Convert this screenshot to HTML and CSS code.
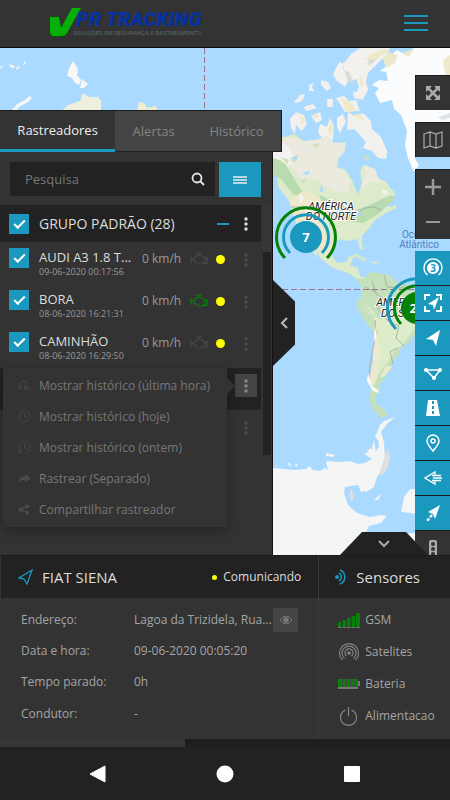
FILE: index.html
```html
<!DOCTYPE html>
<html lang="pt-BR">
<head>
<meta charset="utf-8">
<meta name="viewport" content="width=device-width, initial-scale=1">
<title>VPR Tracking</title>
<link rel="stylesheet" href="styles.css">
</head>
<body>
<svg class="defs" width="0" height="0" aria-hidden="true">
  <symbol id="dots" viewBox="0 0 4 16"><circle cx="2" cy="3" r="1.7"/><circle cx="2" cy="8" r="1.7"/><circle cx="2" cy="13" r="1.7"/></symbol>
  <symbol id="engine" viewBox="0 0 18 14"><path d="M1 4v7M1 7.500h3M4 5h2l1-1.500h5l1.500 2h1.500v2h1.500V5.500h.5v6H14.500v-2L12.500 12H8L5.500 9.500H4zM6 1h6M9 1v2.500" fill="none" stroke="currentColor" stroke-width="1.200"/></symbol>
</svg>

<header class="topbar">
  <a class="logo" href="#" aria-label="VPR Tracking">
    <svg class="logo-mark" viewBox="0 0 32 30" aria-hidden="true"><path d="M0 9l9-1 3 11L22 1h9L18 25q-2 4-6 4H4q-3 0-3-3z" fill="#085508"/><path d="M1 9h9l2 11L23 0h9L18 25q-2 3-6 3H5q-3 0-4-4z" fill="#06b006"/></svg>
    <span class="logo-text"><strong>PR TRACKING</strong><small>SOLUÇÕES EM SEGURANÇA E RASTREAMENTO</small></span>
  </a>
  <button class="menu-button" aria-label="Menu"><span></span><span></span><span></span></button>
</header>

<main class="stage">
  <svg class="map" viewBox="0 48 450 507" preserveAspectRatio="xMidYMid slice" role="img" aria-label="Mapa">
    <rect y="48" width="450" height="507" fill="#aadaff"/>
    <path d="M12 110l5-6 8-4 5-4 2 2-4 4-9 5-3 4zM68 72l2-6 3-5 4 6 1 5-1 3 4 5-2 5-4-2-3-5-5-2zM80 88l2-9 6 5-4 4zM9 64l6 2-1 2-4-1zM17 67l3-1-1 2-3 2zM23 65l2-4 1 3zM0 67l4-2-3 4z" fill="#f7f8f5"/>
    <path d="M60 112l8-7 12-4 3-8 6 4 9 0 3 4v12z" fill="#eef0dd"/>
    <path d="M137 111l2-9 5 1 3 5 9-2 2 6z" fill="#f0edcf"/>
    <!-- Arctic islands -->
    <g fill="#f2f1ed">
      <path d="M345 62l6-8 9-6h30l-4 8-9 8-9 9-2 9 2 8-5 9-7-5 3-8-3-7-6 2-8-7 2-7-7-2z"/>
      <path d="M333 75l3-7 4-7 3 7 2 6 3 7-3 6-8-6zM321 80l7 2 3 6-4 3-6-6zM309 85l5-2-2 4 2 4-5 0zM294 102l6-7 5-1-3 7-6 2zM303 107l10-3 4 4-10 3zM327 99h6l0 8-6 0zM336 98l8-2 5 5 7-1 4 11-15 1zM353 91l8 3 2 6-9-2z"/>
      <path d="M290 119l6-7 8 3 3 9-5 7-6-6-1 9-4-6zM311 116l9-4 2 8-6 3zM318 133l2-9 7 3 3-9 4 8-1 14-8 1zM337 118l6-4 3 8-6 11-3-6zM348 112l7 4 8-3 8 8 1 8 9 8 6 14-1 8-8-1-6-7-9-3 3-6-7-8-5-5-7 1z"/>
    </g>
    <path d="M369 66l12-11 8-7-21 12zM390 88l-8 2-2 7 4 5-6 4M352 72l5 5M344 70l4 11 6 4-4-12z" fill="#d9dbdb"/>
    <path d="M341 98l8 3 8 10-11 0zM351 115l9-1 6 8-5-3zM349 73l4 3-2 3zM363 60l14-9 14-1-16 9zM300 114l5 6-3 5zM313 114l6 1-4 4zM328 129l3-7 3 8-4 7zM361 75l3 7-2 6-3-6z" fill="#f0e9c8"/>
    <path d="M380 103l-5-10 4-5-7-3 7-5 9 1-2-9-6-1 8-6 1-8 8-7 9 5 8-7h36v110h-21l-4 18-6-2-6-4-5-12-3-13 2-14-6-16-7-6-2-9z" fill="#fbfcfd"/>
    <path d="M383 58l5-6 10 3-3 8-9 5zM402 53l12-4-5 8zM443 60l7-5v23l-5-4z" fill="#efe9cb"/>
    <path d="M438 117l12-4v5l-8 2z" fill="#dfe3e5"/>
    <path d="M414 157h36v30h-36v-15l5-7z" fill="#aadaff"/>
    <!-- North America -->
    <path d="M273 136l12 1 9-3 10 7 12-1 11-4 7 7 12-1-1 9-6 7-2 9 9 3 6 10 6 15 4-12-2-11 3-7 11 5 3 8 8 3 8 10 3 3-8 7-5 5 9 1 3-3 2 4-11 5-10 6-6 8-8 9v8l2 6-4-1-3-10-9 2-8-2-7 5-2 10 6 9 9-1 3-5 5-1-4 9 8 3 2 8 9 3 5-3-4 8-12-4-8-6-17-6-12-9-5-8 2 8-8-11-5-9-9-16-6-21-8-10-4-6z" fill="#dcebc9"/>
    <path d="M286 137l19 4 10-1 11-3 8 6 11 0-1 9-6 6-3 9 9 4 7 11-3 10-15-1-17-11-15-1-14-15-11-15zM365 165l10 4 3 8 4 6-12-2-5 9-4-4 4-10z" fill="#ece9df"/>
    <path d="M273 157l12 7 8 13 9 14 20 5 15 7 16 8 17-6 12-6 10-4 3 4-18 16-14 8-17-2-12-12-24-9-17-6-12-15-8-4z" fill="#b9dbb0"/>
    <path d="M289 200l16-10 14 6 6 12-7 12 8 16 7 10-6 9-11-8-14-15-9-16z" fill="#eee8cc"/>
    <path d="M273 148l11-5 7 8 2 8-5 7-7-6-8-2zM382 190l5 0 1 5-5-1zM299 193l5 5-4 7zM304 204l4 8-3 2z" fill="#f3f3f1"/>
    <path d="M290 160l8-6-3 9zM281 157l8 3-2 4zM300 180l7-2-4 6zM363 155l7 2-3 4zM312 145l7-2-2 5z" fill="#cde2b6"/>
    <path d="M291 207h48l8 8 10-2 8-5 9-1 8 3" fill="none" stroke="#aab4a6" stroke-width="1"/>
    <path d="M290 158l8-2-1 4zM302 174l8-4-2 5zM319 191l3-7 1 8zM349 210l10 1 3 6-8-3z" fill="#aadaff"/>
    <path d="M348 257l9-3 11 6-4 1-8-4-7 2zM371 261l8 1-3 2-5-1z" fill="#d7e7c3"/>
    <!-- South America -->
    <path d="M356 278l8 1 6-7 12 2 8 1 6 7 10 2 5 6 39 16v17l-33 9-8 11-8 5-3 9-7 5 1 7-6 4-2 7-5 5 1 7-5 5 1 7 8 5 4 6-6 3-9-8-4-11 3-14 1-18 3-15-2-20-8-9-8-14-2-6 6-8-1-9z" fill="#c5e1bc"/>
    <path d="M361 295l9 17 9 7 18-3 9-8 13 15-8 11-9 11-7 5-7 12-8 10-7 14-3-5 3-16 1-18 4-15-3-18-9-10z" fill="#ddecc9"/>
    <path d="M361 302l8 12 9 5-2 20 4 11-2 18-4 18-5-4 4-21 1-24 2-16-8-10zM380 377l6-11 6 1-8 10z" fill="#eee8ce"/>
    <path d="M369 374l3-22 4-17-1-15M377 293l-12-6M384 275l3 12 15 1 3-4M372 281l4 13 10 6-9 8 11 13 11 5-3 12 8 8M397 348l-7 4 3 12" fill="none" stroke="#aab3a5" stroke-width="1"/>
    <path d="M368 373l4 13 6 4 1 3-6-2-6-10zM375 326l2 11-3 5z" fill="#fafafa"/>
    <!-- Antarctica -->
    <path d="M273 468l12 1 9 1 12-1 3-3 4 4 7 1 5-3 3 2-2-9 14 1 10-1 8 3 7-1 7-4-4-8 2-3 5 4 4-5-1-7-3-3 5-12 4-4 11-4-8 7-6 8 3 10 1 16-2 11-6 8-3 10-8 5-9-7-12 2-1 6 4 12 9 8 13 4 11-2 6 1-6 7-12 3-4 8 8 7 18-6 36-3v31H273z" fill="#f4f5f5"/>
    <path d="M374 440l2 13-6 5-6-5 7-1zM367 450l5-1-3 4zM326 453l9 2-2 2-7-1zM287 462l4 2-1 3zM294 465l4-1-1 3zM374 500l8-7-4 7zM359 487l6-3 1 6-5 2zM401 512l3-15 6-8 8 0v25z" fill="#f4f5f5"/>
    <path d="M388 448l2 10-2 10-6 7-3-1 4-12zM351 488l3 7-2 7-3-6z" fill="#dedfe0"/>
    <path d="M204.500 48v62M273 289.500h142" fill="none" stroke="#9e7387" stroke-width="1" stroke-dasharray="6 3"/>
    <g class="place">
      <text x="331" y="210">AMÉRICA</text><text x="331" y="220">DO NORTE</text>
      <text x="399" y="306">AMÉRICA</text><text x="399" y="317">DO SUL</text>
    </g>
    <g class="ocean"><text x="419" y="238">Oceano</text><text x="419" y="248">Atlântico</text></g>
    <g fill="none" stroke-width="3">
      <path d="M285 258a29.500 29.500 0 1 1 42 0" stroke="#078007"/>
      <path d="M290 253a22.500 22.500 0 1 1 32 0" stroke="#1b98bd"/>
      <path d="M396 329a29.500 29.500 0 1 1 42 0" stroke="#1b98bd"/>
      <path d="M401 324a22.500 22.500 0 1 1 32 0" stroke="#078007"/>
    </g>
    <circle cx="306" cy="237" r="16" fill="#1b98bd"/><circle cx="417" cy="308" r="16" fill="#078007"/>
    <g class="count"><text x="306" y="242">7</text><text x="417" y="313">21</text></g>
  </svg>

  <aside class="sidebar">
    <nav class="tabs" aria-label="Painel">
      <button class="tab active">Rastreadores</button><button class="tab">Alertas</button><button class="tab">Histórico</button>
    </nav>
    <div class="panel">
      <form class="search">
        <div class="search-box">
          <input type="text" placeholder="Pesquisa" aria-label="Pesquisa">
          <button type="button" aria-label="Buscar"><svg width="14" height="14" viewBox="0 0 14 14"><circle cx="6" cy="6" r="4.500" fill="none" stroke="#e5e5e5" stroke-width="1.800"/><path d="M9 9l4 4" stroke="#e5e5e5" stroke-width="2"/></svg></button>
        </div>
        <button type="button" class="list-button" aria-label="Opções"><svg width="14" height="10" viewBox="0 0 14 10"><path d="M0 2h14M0 5h14M0 8h14" stroke="#eee" stroke-width="1.500"/></svg></button>
      </form>
      <div class="list-area">
        <div class="list">
          <div class="group">
            <input type="checkbox" id="group" checked><label for="group">GRUPO PADRÃO (28)</label>
            <button class="collapse" aria-label="Recolher"><span></span></button>
            <button class="more light" aria-label="Mais"><svg><use href="#dots"/></svg></button>
          </div>
          <div class="vehicle">
            <input type="checkbox" id="v1" checked><label for="v1"><b>AUDI A3 1.8 T...</b><small>09-06-2020 00:17:56</small></label>
            <span class="speed">0 km/h</span><svg class="engine"><use href="#engine"/></svg><i class="status"></i>
            <button class="more" aria-label="Mais"><svg><use href="#dots"/></svg></button>
          </div>
          <div class="vehicle">
            <input type="checkbox" id="v2" checked><label for="v2"><b>BORA</b><small>08-06-2020 16:21:31</small></label>
            <span class="speed">0 km/h</span><svg class="engine on"><use href="#engine"/></svg><i class="status"></i>
            <button class="more" aria-label="Mais"><svg><use href="#dots"/></svg></button>
          </div>
          <div class="vehicle">
            <input type="checkbox" id="v3" checked><label for="v3"><b>CAMINHÃO</b><small>08-06-2020 16:29:50</small></label>
            <span class="speed">0 km/h</span><svg class="engine"><use href="#engine"/></svg><i class="status"></i>
            <button class="more" aria-label="Mais"><svg><use href="#dots"/></svg></button>
          </div>
          <div class="vehicle selected">
            <button class="more open" aria-label="Mais" aria-expanded="true"><svg><use href="#dots"/></svg></button>
            <div class="dropdown">
              <button><svg viewBox="0 0 14 14"><path d="M2 10A5 5 0 1 1 11 5M0 10h4v-3" /><path d="M6 8l1-1v5M9 6v6M9 9q3-1 3 1v2"/></svg>Mostrar histórico (última hora)</button>
              <button><svg viewBox="0 0 14 14"><circle cx="7" cy="7" r="6"/><path d="M7 3v4l3 2"/></svg>Mostrar histórico (hoje)</button>
              <button><svg viewBox="0 0 14 14"><path d="M3 11.500A6 6 0 1 1 7 13M0 12h4V8M7 3v4l3 2"/></svg>Mostrar histórico (ontem)</button>
              <button><svg class="solid" viewBox="0 0 14 14"><path d="M8 2l6 5-6 4V8.500Q3 8 1 12 0 5 8 4.500z"/></svg>Rastrear (Separado)</button>
              <button><svg class="solid" viewBox="0 0 14 14"><circle cx="3" cy="7" r="2.500"/><circle cx="10" cy="3.500" r="2.200"/><circle cx="10" cy="10.500" r="2.200"/><path d="M3 6l7-3v1.500L4.500 7l5.500 2.500V11L3 8z"/></svg>Compartilhar rastreador</button>
            </div>
          </div>
          <div class="vehicle"><button class="more" aria-label="Mais"><svg><use href="#dots"/></svg></button></div>
        </div>
        <div class="scroll"><span></span></div>
      </div>
    </div>
    <button class="side-toggle" aria-label="Recolher painel"><svg width="8" height="12" viewBox="0 0 8 12"><path d="M7 1L2 6l5 5" fill="none" stroke="#bbb" stroke-width="2"/></svg></button>
  </aside>

  <div class="tools">
    <button class="tool" aria-label="Tela cheia"><svg viewBox="0 0 20 20"><path d="M4 4l12 12M16 4L4 16" stroke="#aaa" stroke-width="2.500"/><path d="M3 3h6L3 9zM17 3v6l-6-6zM3 17v-6l6 6zM17 17h-6l6-6z" fill="#aaa"/></svg></button>
    <button class="tool" aria-label="Camadas"><svg viewBox="0 0 20 20"><path d="M1 4l6-2 6 2 6-2v14l-6 2-6-2-6 2zM7 2v14M13 4v14" fill="none" stroke="#aaa" stroke-width="1.200"/></svg></button>
    <div class="zoom">
      <button class="tool" aria-label="Aproximar"><svg viewBox="0 0 20 20"><path d="M10 2v16M2 10h16" stroke="#999" stroke-width="2.500"/></svg></button>
      <button class="tool" aria-label="Afastar"><svg viewBox="0 0 20 20"><path d="M3 10h14" stroke="#999" stroke-width="2"/></svg></button>
    </div>
    <div class="blue-tools">
      <button class="tool" aria-label="Agrupar"><svg viewBox="0 0 20 20"><circle cx="10" cy="10" r="6" fill="#fff"/><path d="M4.500 17a9 9 0 1 1 11 0" fill="none" stroke="#fff" stroke-width="1.300"/><text x="10" y="13.500">3</text></svg></button>
      <button class="tool" aria-label="Enquadrar"><svg viewBox="0 0 20 20"><path d="M2 7V2h5M13 2h5v5M18 13v5h-5M7 18H2v-5" fill="none" stroke="#fff" stroke-width="2"/><path d="M16 4L5 11l5 1 1 5z" fill="#fff"/></svg></button>
      <button class="tool" aria-label="Veículos"><svg viewBox="0 0 20 20"><path d="M17 2L3 11l7 1 3 6z" fill="#fff"/></svg></button>
      <button class="tool" aria-label="Cercas"><svg viewBox="0 0 20 20"><path d="M3 7h14l-6 8z" fill="none" stroke="#fff" stroke-width="1.500"/><circle cx="3" cy="7" r="2" fill="#fff"/><circle cx="17" cy="7" r="2" fill="#fff"/><circle cx="11" cy="15" r="2" fill="#fff"/></svg></button>
      <button class="tool" aria-label="Rotas"><svg viewBox="0 0 20 20"><path d="M5 2h9l3 16H3z" fill="#fff"/><path d="M10 3v14" stroke="#1b98bd" stroke-width="2" stroke-dasharray="3 2"/></svg></button>
      <button class="tool" aria-label="Pontos"><svg viewBox="0 0 20 20"><path d="M10 18Q4 11 4 8a6 6 0 0 1 12 0q0 3-6 10z" fill="none" stroke="#fff" stroke-width="1.500"/><circle cx="10" cy="8" r="2" fill="none" stroke="#fff" stroke-width="1.500"/></svg></button>
      <button class="tool" aria-label="Nomes"><svg viewBox="0 0 20 20"><path d="M12 7V4L2 10l10 6v-3M9 7.500h9M10 10h9M9 12.500h9" fill="none" stroke="#fff" stroke-width="1.300"/></svg></button>
      <button class="tool" aria-label="Rastro"><svg viewBox="0 0 20 20"><path d="M17 2L5 9l5 2 2 5z" fill="#fff"/><path d="M9 12l-5 6" stroke="#fff" stroke-width="2.500" stroke-dasharray="3 1.500"/></svg></button>
      <button class="tool gray" aria-label="Trânsito"><svg viewBox="0 0 20 20"><rect x="6" y="1" width="8" height="18" rx="2" fill="#aaa"/><circle cx="10" cy="5" r="2" fill="#333"/><circle cx="10" cy="10" r="2" fill="#333"/><circle cx="10" cy="15" r="2" fill="#333"/></svg></button>
    </div>
  </div>
  <button class="bottom-toggle" aria-label="Recolher detalhes"><svg width="12" height="8" viewBox="0 0 12 8"><path d="M1 1l5 5 5-5" fill="none" stroke="#aaa" stroke-width="2"/></svg></button>
</main>

<section class="details">
  <article class="device">
    <header>
      <svg width="16" height="16" viewBox="0 0 16 16"><path d="M14 1L1 9l5 1 3 5z" fill="none" stroke="#1b98bd" stroke-width="1.300"/></svg>
      <h2>FIAT SIENA</h2><span class="state">Comunicando</span>
    </header>
    <dl>
      <div><dt>Endereço:</dt><dd>Lagoa da Trizidela, Rua...</dd><button aria-label="Ver endereço"><svg width="14" height="10" viewBox="0 0 14 10"><path d="M1 5q6-8 12 0-6 8-12 0z" fill="none" stroke="#777"/><circle cx="7" cy="5" r="2.800" fill="#777"/></svg></button></div>
      <div><dt>Data e hora:</dt><dd>09-06-2020 00:05:20</dd></div>
      <div><dt>Tempo parado:</dt><dd>0h</dd></div>
      <div><dt>Condutor:</dt><dd>-</dd></div>
    </dl>
  </article>
  <article class="sensors">
    <header>
      <svg width="14" height="16" viewBox="0 0 14 16"><circle cx="3" cy="8" r="2" fill="#1b98bd"/><path d="M5 4a4.500 4.500 0 0 1 0 8M6 1a7.500 7.500 0 0 1 0 14" fill="none" stroke="#1b98bd" stroke-width="1.500"/></svg>
      <h2>Sensores</h2>
    </header>
    <ul>
      <li><svg viewBox="0 0 22 20"><path d="M0 12h3v5H0zM4.500 10h3.500v7H4.500zM9 8h3.500v9H9zM13.500 6H17v11h-3.500zM18 3h4v14h-4z" fill="#078007"/><path d="M0 17.500h22" stroke="#777" stroke-dasharray="3.500 1"/></svg>GSM</li>
      <li><svg viewBox="0 0 22 20"><circle cx="11" cy="11" r="1.800" fill="#858585"/><path d="M8.500 14a4 4 0 1 1 5 0M6.500 16.500a7 7 0 1 1 9 0M4.500 18a9.500 9.500 0 1 1 13 0" fill="none" stroke="#858585" stroke-width="1.200"/></svg>Satelites</li>
      <li><svg viewBox="0 0 22 20"><path d="M0 5h20v2h2v5h-2v3H0z" fill="#777"/><path d="M0 5h20v8H0z" fill="#078007"/><path d="M4.500 5v8M8.500 5v8M12.500 5v8M16.500 5v8" stroke="#444"/></svg>Bateria</li>
      <li><svg viewBox="0 0 22 20"><path d="M7.500 4a8 8 0 1 0 6 0M10.500 1v9" fill="none" stroke="#858585" stroke-width="1.200"/></svg>Alimentacao</li>
    </ul>
  </article>
</section>
<div class="hscroll"><span></span></div>

<nav class="system" aria-label="Sistema">
  <button aria-label="Voltar"><svg width="18" height="18" viewBox="0 0 18 18"><path d="M1 9L16 1v16z" fill="#fff" stroke="#fff" stroke-linejoin="round"/></svg></button>
  <button aria-label="Início"><svg width="18" height="18" viewBox="0 0 18 18"><circle cx="9" cy="9" r="8.500" fill="#fff"/></svg></button>
  <button aria-label="Recentes"><svg width="18" height="18" viewBox="0 0 18 18"><rect x="1" y="1" width="16" height="16" rx="1" fill="#fff"/></svg></button>
</nav>
</body>
</html>
```

FILE: styles.css
```css
* { box-sizing: border-box; }
body {
  margin: 0;
  min-height: 100vh;
  display: flex;
  flex-direction: column;
  background: #222;
  color: #a5a5a5;
  font: 12px/18px "Open Sans", "Noto Sans", sans-serif;
}
button { border: 0; padding: 0; margin: 0; background: none; color: inherit; font: inherit; display: flex; align-items: center; justify-content: center; }
svg { display: block; flex: none; }
.defs { position: absolute; }

.topbar { height: 48px; flex: none; display: flex; align-items: center; justify-content: space-between; padding: 0 15px 2px 49px; background: #333; border-bottom: 1px solid #100808; }
.logo { display: flex; align-items: center; text-decoration: none; }
.logo-mark { width: 32px; height: 30px; }
.logo-text { display: flex; flex-direction: column; margin-left: -8px; }
.logo-text strong { padding-left: 3px; font: italic 900 20px/20px Roboto, sans-serif; color: #0632a0; }
.logo-text small { font: 6px/8px Roboto, sans-serif; color: #5b6770; white-space: nowrap; }
.menu-button { width: 38px; height: 30px; flex-direction: column; gap: 5px; border: 1px solid #363636; }
.menu-button span { width: 24px; height: 2px; background: #1b98bd; }

.stage { position: relative; flex: 1 0 auto; display: flex; justify-content: space-between; overflow: hidden; }
.map { position: absolute; inset: 0; width: 100%; height: 100%; }
.map text { text-anchor: middle; font-family: Roboto, sans-serif; }
.place text { font-size: 11px; font-style: italic; fill: #222; stroke: #fff; stroke-width: 2px; paint-order: stroke; }
.ocean text { font-size: 10px; fill: #5282c2; }
.count text { font: 700 13px "Open Sans", sans-serif; fill: #fff; }

.sidebar { position: relative; width: 273px; padding-top: 62px; display: flex; flex-direction: column; }
.tabs { display: flex; width: 282px; height: 42px; background: #444; border-top: 1px solid #1b1b1b; border-right: 1px solid #1b1b1b; }
.tab { flex: 1 1 auto; padding: 0 17px; font-size: 13px; color: #858585; border-bottom: 1px solid #222; }
.tab.active { background: #333; color: #eee; border-bottom: 3px solid #1b98bd; }
.panel { flex: 1; background: #333; border-right: 1px solid #171010; }
.search { display: flex; gap: 4px; padding: 10px 11px 8px 10px; }
.search-box { flex: 1; min-width: 0; display: flex; height: 34px; background: #222; padding-right: 10px; }
.search-box input { flex: 1; min-width: 0; border: 0; background: none; color: #ccc; font: 13px "Open Sans", sans-serif; padding: 0 15px; outline: 0; }
.search-box input::placeholder { color: #777; opacity: 1; }
.list-button { flex: none; width: 42px; height: 35px; background: #1b98bd; }
.list-area { display: flex; gap: 2px; }
.list { flex: 1; min-width: 0; }
.scroll { width: 8px; margin-right: 1px; padding-top: 47px; background: #363636; height: 250px; }
.scroll span { display: block; height: 203px; background: #222; }
input[type="checkbox"] { appearance: none; flex: none; width: 20px; height: 20px; margin: 0 10px 0 0; background: #1b98bd; display: grid; place-items: center; }
input[type="checkbox"]::after { content: ""; width: 9px; height: 4px; border: solid #fff; border-width: 0 0 2px 2px; transform: translateY(-1px) rotate(-45deg); }
.group { display: flex; align-items: center; height: 37px; padding: 0 4px 0 9px; background: #222; color: #ddd; font-size: 14px; }
.group label { flex: 1; }
.collapse { width: 12px; height: 22px; margin-right: 6px; }
.collapse span { width: 12px; height: 2px; background: #1b98bd; }
.more { width: 22px; height: 23px; color: #4d4d4d; }
.more svg { width: 4px; height: 16px; fill: currentColor; }
.more.light { color: #ddd; }
.more.open { background: #444; color: #888; }
.vehicle { position: relative; display: flex; align-items: flex-start; height: 42px; padding: 6px 4px 0 9px; }
.vehicle label { width: 94px; margin-right: 9px; }
.vehicle b { display: block; white-space: nowrap; color: #ddd; font-weight: 400; font-size: 13px; }
.vehicle small { display: block; font-size: 9px; line-height: 12px; color: #999; white-space: nowrap; }
.speed { width: 48px; padding-top: 2px; color: #999; }
.engine { width: 18px; height: 14px; margin-top: 4px; color: #484848; }
.engine.on { color: #078007; }
.status { width: 9px; height: 9px; border-radius: 50%; background: #ff0; margin: 7px 0 0 8px; }
.vehicle .more { margin-left: auto; }
.vehicle.selected { background: #222; }
.dropdown { position: absolute; z-index: 2; left: 3px; top: 0; width: 224px; padding: 2px 0; background: #333; box-shadow: 0 4px 12px rgba(0,0,0,.3); }
.dropdown::after { content: ""; position: absolute; left: 100%; top: 10px; border: 8px solid transparent; border-left-color: #333; border-right: 0; }
.dropdown button { width: 100%; height: 31px; justify-content: flex-start; padding-left: 15px; gap: 8px; color: #777; white-space: nowrap; }
.dropdown svg { width: 13px; height: 13px; fill: none; stroke: #4a4a4a; }
.dropdown .solid { fill: #4a4a4a; stroke: none; }
.side-toggle { position: absolute; left: 100%; top: 232px; width: 22px; height: 86px; background: #222; clip-path: polygon(0 0, 100% 25%, 100% 75%, 0 100%); }

.tools { position: relative; width: 35px; height: 507px; padding-top: 27px; display: flex; flex-direction: column; gap: 12px; overflow: hidden; }
.tool { width: 35px; height: 35px; flex: none; background: #333; border-left: 1px solid #1d1d1d; border-top: 1px solid #1d1d1d; }
.tool svg { width: 20px; height: 20px; }
.zoom .tool + .tool { border-top-color: #333; }
.blue-tools .tool { background: #1b98bd; border-left: 0; border-top: 0; border-bottom: 1px solid #1d1d1d; }
.blue-tools .gray { background: #333; border: 0; }
.tool text { font: 700 10px "Open Sans", sans-serif; fill: #1b98bd; text-anchor: middle; }
.bottom-toggle { position: absolute; right: 22px; bottom: 0; width: 88px; height: 23px; background: #222; clip-path: polygon(25% 0, 75% 0, 100% 100%, 0 100%); }

.details { display: grid; grid-template-columns: 318fr 132fr; background: #333; border-top: 1px solid #1b1b1b; border-left: 1px solid #333; }
.details article { min-width: 0; }
.details header { display: flex; align-items: center; height: 42px; background: #222; color: #ddd; }
.details h2 { margin: 0; font-size: 15px; font-weight: 400; }
.device header { padding: 0 17px; gap: 8px; }
.state { margin-left: auto; display: flex; align-items: center; gap: 6px; }
.state::before { content: ""; width: 5px; height: 5px; border-radius: 50%; background: #ff0; }
.device dl { margin: 0; padding: 7px 17px 9px; }
.device dl div { display: flex; align-items: center; height: 31px; padding: 0 3px; border-bottom: 1px solid #373737; }
.device dl div:last-child, .sensors li:last-child { border: 0; }
dt { flex: none; width: 113px; }
dd { margin: 0; flex: 1; min-width: 0; white-space: nowrap; }
dl button { flex: none; width: 25px; height: 24px; background: #444; }
.sensors { border-left: 1px solid #3b3b3b; }
.sensors header { padding-left: 15px; gap: 8px; }
.sensors ul { list-style: none; margin: 0; padding: 6px 0 7px 16px; }
.sensors li { display: flex; align-items: center; gap: 5px; height: 32px; padding-left: 3px; border-bottom: 1px solid #373737; }
.sensors li svg { width: 22px; height: 20px; }
.hscroll { height: 8px; background: #1e1e1e; }
.hscroll span { display: block; width: 41%; height: 8px; background: #363636; }
.system { height: 53px; display: flex; align-items: center; justify-content: space-around; padding: 0 35px; background: #222; }
```
